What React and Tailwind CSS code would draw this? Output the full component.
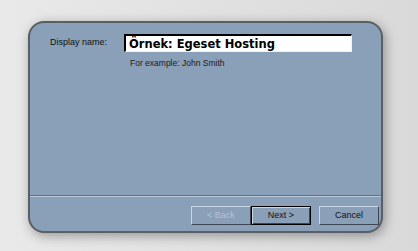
export default function App() {
  return (
    <div className="w-[418px] h-[251px] bg-gradient-to-r from-[#e9e9e9] to-[#d9d9d9] pl-[28px] pt-[21px] overflow-hidden" style={{ fontFamily: '"Liberation Sans", Arial, sans-serif' }}>
      <div className="w-[355px] h-[212px] bg-[#8a9fb8] border-2 border-[#5a5f66] rounded-[16px] shadow-[2px_3px_12px_rgba(0,0,0,0.35)] flex flex-col">
        {/* Form */}
        <div className="flex-1 pt-[11px]">
          <div className="flex items-center">
            <span className="w-[94px] shrink-0 pl-[20px] text-[9px] text-[#111] whitespace-nowrap">Display name:</span>
            <div className="w-[228px] h-[18px] bg-white border-t-2 border-l-2 border-r border-b border-t-black border-l-black border-r-[#f2f2f2] border-b-[#f2f2f2] flex items-center pl-[3px]">
              <span className="text-[11.5px] font-bold text-black leading-[15px] pt-[1px]" style={{ fontFamily: '"DejaVu Sans", Verdana, sans-serif' }}>Örnek: Egeset Hosting</span>
            </div>
          </div>
          <p className="pl-[100px] mt-[5px] text-[8.5px] text-[#1a1a1a]">For example: John Smith</p>
        </div>
        {/* Separator */}
        <div className="border-t border-[#5e7385] border-b border-b-[#b9c8d8] mb-[9px]"></div>
        {/* Buttons */}
        <div className="flex justify-end pr-[2px] pb-[6px] gap-[8px]">
          <div className="flex">
            <button className="w-[60px] h-[19px] bg-[#8a9fb8] border border-t-[#c9d5e2] border-l-[#c9d5e2] border-r-[#3d4652] border-b-[#3d4652] text-[9px] text-[#b6c3d2]">&lt; Back</button>
            <button className="w-[60px] h-[19px] bg-[#8a9fb8] border border-black shadow-[inset_1px_1px_0_#c9d5e2,inset_-1px_-1px_0_#3d4652] text-[9px] text-[#111]">Next &gt;</button>
          </div>
          <button className="w-[60px] h-[19px] bg-[#8a9fb8] border border-t-[#c9d5e2] border-l-[#c9d5e2] border-r-[#3d4652] border-b-[#3d4652] text-[9px] text-[#111]">Cancel</button>
        </div>
      </div>
    </div>
  )
}
